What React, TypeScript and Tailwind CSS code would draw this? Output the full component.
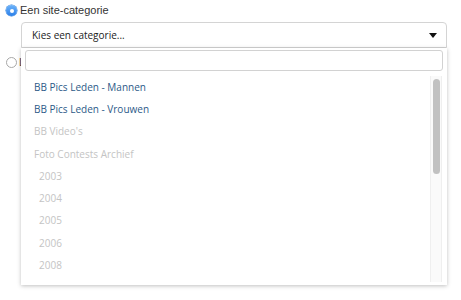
const items = [
  { label: "BB Pics Leden - Mannen", active: true, indent: false },
  { label: "BB Pics Leden - Vrouwen", active: true, indent: false },
  { label: "BB Video's", active: false, indent: false },
  { label: "Foto Contests Archief", active: false, indent: false },
  { label: "2003", active: false, indent: true },
  { label: "2004", active: false, indent: true },
  { label: "2005", active: false, indent: true },
  { label: "2006", active: false, indent: true },
  { label: "2008", active: false, indent: true },
]

export default function App() {
  return (
    <div className="relative h-[300px] w-[461px] overflow-hidden bg-white font-['Liberation_Sans',Arial,sans-serif]">
      <div className="flex flex-col pl-[6px] pt-[4px]">
        <label className="flex h-[13px] items-center gap-[3px] text-[11px] leading-none text-[#333]">
          <span className="flex h-[11px] w-[11px] items-center justify-center rounded-full bg-gradient-to-b from-[#6cb3fa] to-[#2a7fe8] shadow-[0_0_0_0.5px_#2f7fd8]">
            <span className="h-[4px] w-[4px] rounded-full bg-white" />
          </span>
          Een site-categorie
        </label>
        <div className="ml-[15px] mt-[5px] flex h-[26px] w-[426px] items-center justify-between rounded-t-[4px] border border-[#d4d4d4] bg-white pl-[10px] pr-[9px] font-['Open_Sans',sans-serif] text-[10px] text-[#222]">
          <span>Kies een categorie...</span>
          <span className="h-0 w-0 border-x-[4px] border-t-[5px] border-x-transparent border-t-[#111]" />
        </div>
        <label className="mt-[8px] flex h-[12px] items-center gap-[2px] text-[11px] leading-none text-[#5a4a3a]">
          <span className="h-[11px] w-[11px] rounded-full border border-[#a8a8a8] bg-white" />
          Link naar een pagina
        </label>
      </div>

      <div className="absolute left-[21px] top-[48px] flex h-[237px] w-[426px] flex-col bg-white font-['Open_Sans',sans-serif] shadow-[0_1px_4px_rgba(0,0,0,0.25)]">
        <div className="px-[4px] pt-[2px]">
          <div className="h-[21px] rounded-[3px] border border-[#d2d2d2] bg-white" />
        </div>
        <div className="mt-[5px] flex min-h-0 flex-1">
          <ul className="flex flex-1 flex-col">
            {items.map((item) => (
              <li
                key={item.label}
                className={`flex h-[22.3px] items-center text-[10px] ${item.indent ? "pl-[18px]" : "pl-[13px]"} ${item.active ? "text-[#2c5a88]" : "text-[#c4c4c4]"}`}
              >
                {item.label}
              </li>
            ))}
          </ul>
          <div className="mb-[3px] mr-[5px] flex w-[12px] justify-center border-x border-[#efefef] bg-[#fafafa] pt-[3px]">
            <div className="h-[95px] w-[7px] rounded-full bg-[#c1c1c1]" />
          </div>
        </div>
      </div>
    </div>
  )
}
